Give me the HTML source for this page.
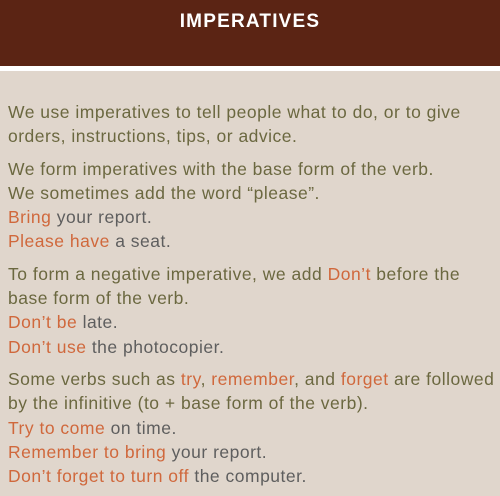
<!DOCTYPE html>
<html><head><style>
html,body{margin:0;padding:0}
body{width:500px;height:491px;background:#e0d6cc;font-family:"Liberation Sans",sans-serif;overflow:hidden;position:relative}
.hd{position:absolute;left:0;top:0;width:500px;height:66px;background:#5b2414;color:#fff;font-weight:bold;font-size:19px;text-align:center;line-height:44px;letter-spacing:1.2px}
.wl{position:absolute;left:0;top:66px;width:500px;height:5px;background:#fff}
.c{position:absolute;left:8px;top:100px;width:492px;font-size:17.5px;letter-spacing:0.5px;line-height:24.3px;color:#6b6840;white-space:nowrap}
p{margin:0 0 8px 0}
.o{color:#d0683c}
.g{color:#5e5e5e}
</style></head><body>
<div class="hd">IMPERATIVES</div>
<div class="wl"></div>
<div class="c">
<p>We use imperatives to tell people what to do, or to give<br>orders, instructions, tips, or advice.</p>
<p>We form imperatives with the base form of the verb.<br>We sometimes add the word “please”.<br><span class="o">Bring</span> <span class="g">your report.</span><br><span class="o">Please have</span> <span class="g">a seat.</span></p>
<p>To form a negative imperative, we add <span class="o">Don’t</span> before the<br>base form of the verb.<br><span class="o">Don’t be</span> <span class="g">late.</span><br><span class="o">Don’t use</span> <span class="g">the photocopier.</span></p>
<p>Some verbs such as <span class="o">try</span>, <span class="o">remember</span>, and <span class="o">forget</span> are followed<br>by the infinitive (to + base form of the verb).<br><span class="o">Try to come</span> <span class="g">on time.</span><br><span class="o">Remember to bring</span> <span class="g">your report.</span><br><span class="o">Don’t forget to turn off</span> <span class="g">the computer.</span></p>
</div>
</body></html>
